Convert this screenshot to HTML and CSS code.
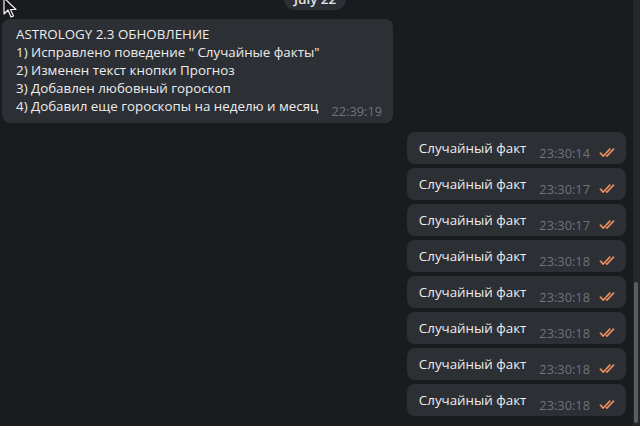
FILE: index.html
```html
<!DOCTYPE html>
<html lang="ru">
<head>
  <meta charset="UTF-8" />
  <meta name="viewport" content="width=device-width, initial-scale=1.0" />
  <title>Astrology</title>
  <link rel="stylesheet" href="styles.css">
</head>
<body>

  <div id="window">
    <div id="chat">
      <div class="date-row">
        <span class="date-pill">July 22</span>
      </div>

      <div class="msg in">
        <div class="bubble">
          <div class="line">ASTROLOGY 2.3 ОБНОВЛЕНИЕ</div>
          <div class="line">1) Исправлено поведение " Случайные факты"</div>
          <div class="line">2) Изменен текст кнопки Прогноз</div>
          <div class="line">3) Добавлен любовный гороскоп</div>
          <div class="last-row">
            <div class="line last">4) Добавил еще гороскопы на неделю и месяц</div>
            <span class="time">22:39:19</span>
          </div>
        </div>
      </div>

      <div id="outgoing"></div>
    </div>

    <div id="scrollbar">
      <div class="thumb"></div>
    </div>
  </div>

  <svg id="cursor" width="14" height="22" viewBox="0 0 14 22">
    <path d="M1 1 L1 17 L5 13 L8 20 L10.5 19 L7.5 12.5 L13 12.5 Z" fill="#141518" stroke="#f2f2f2" stroke-width="1.2" stroke-linejoin="round" />
  </svg>

  <script>
    const times = ["23:30:14", "23:30:17", "23:30:17", "23:30:18", "23:30:18", "23:30:18", "23:30:18", "23:30:18"];
    const outgoing = document.getElementById("outgoing");

    // исходящие сообщения
    times.forEach((t) => {
      const msg = document.createElement("div");
      msg.className = "msg out";
      msg.innerHTML = `
        <div class="bubble">
          <div class="last-row">
            <div class="line last">Случайный факт</div>
            <span class="time">${t}</span>
            <svg class="checks" width="19" height="9" viewBox="0 0 19 9">
              <path d="M1.5 5.2 L4.3 8 L10.8 1.2 M7.6 7.6 L8 8 L14.5 1.2" fill="none" stroke="#e58d5d" stroke-width="1.8" stroke-linecap="round" stroke-linejoin="round" />
            </svg>
          </div>
        </div>`;
      outgoing.appendChild(msg);
    });
  </script>
</body>
</html>
```

FILE: styles.css
```css
body {
  margin: 0;
  background: #1a1b1f;
  overflow: hidden;
  font-family: "Open Sans", "Noto Sans", sans-serif;
  font-size: 13.35px;
  color: #ededed;
}

#window {
  display: flex;
  height: 426px;
}

#chat {
  flex: 1;
  display: flex;
  flex-direction: column;
  padding: 0 7px 0 2px;
}

.date-row {
  display: flex;
  justify-content: center;
  margin-top: -12px;
  padding-left: 2px;
}

.date-pill {
  background: #2c2f35;
  color: #e6e6e6;
  font-weight: 600;
  line-height: 18px;
  padding: 2px 10px;
  border-radius: 11px;
}

.msg {
  display: flex;
}

.msg.in {
  margin-top: 9px;
  margin-bottom: 9px;
}

.msg.out {
  justify-content: flex-end;
  margin-bottom: 4px;
}

.bubble {
  background: #2c2f34;
  border-radius: 8px;
}

.msg.in .bubble {
  padding: 6px 11px 5px 14px;
}

.msg.out .bubble {
  padding: 7px 8px 4px 12px;
}

.line {
  line-height: 18px;
  white-space: nowrap;
}

.last-row {
  display: flex;
  align-items: flex-end;
}

.line.last {
  padding-bottom: 3px;
}

.time {
  font-size: 12.8px;
  line-height: 14px;
  color: #6f747b;
  margin-left: 13px;
}

.checks {
  margin-left: 9px;
  margin-bottom: 3px;
}

#scrollbar {
  width: 7px;
  background: #25272b;
  display: flex;
  flex-direction: column;
  justify-content: flex-end;
  padding-bottom: 3px;
}

.thumb {
  height: 141px;
  margin: 0 2px 0 1px;
  background: #5a5c61;
  border-radius: 2px;
}

#cursor {
  position: absolute;
  left: 3px;
  top: -3px;
}
```
